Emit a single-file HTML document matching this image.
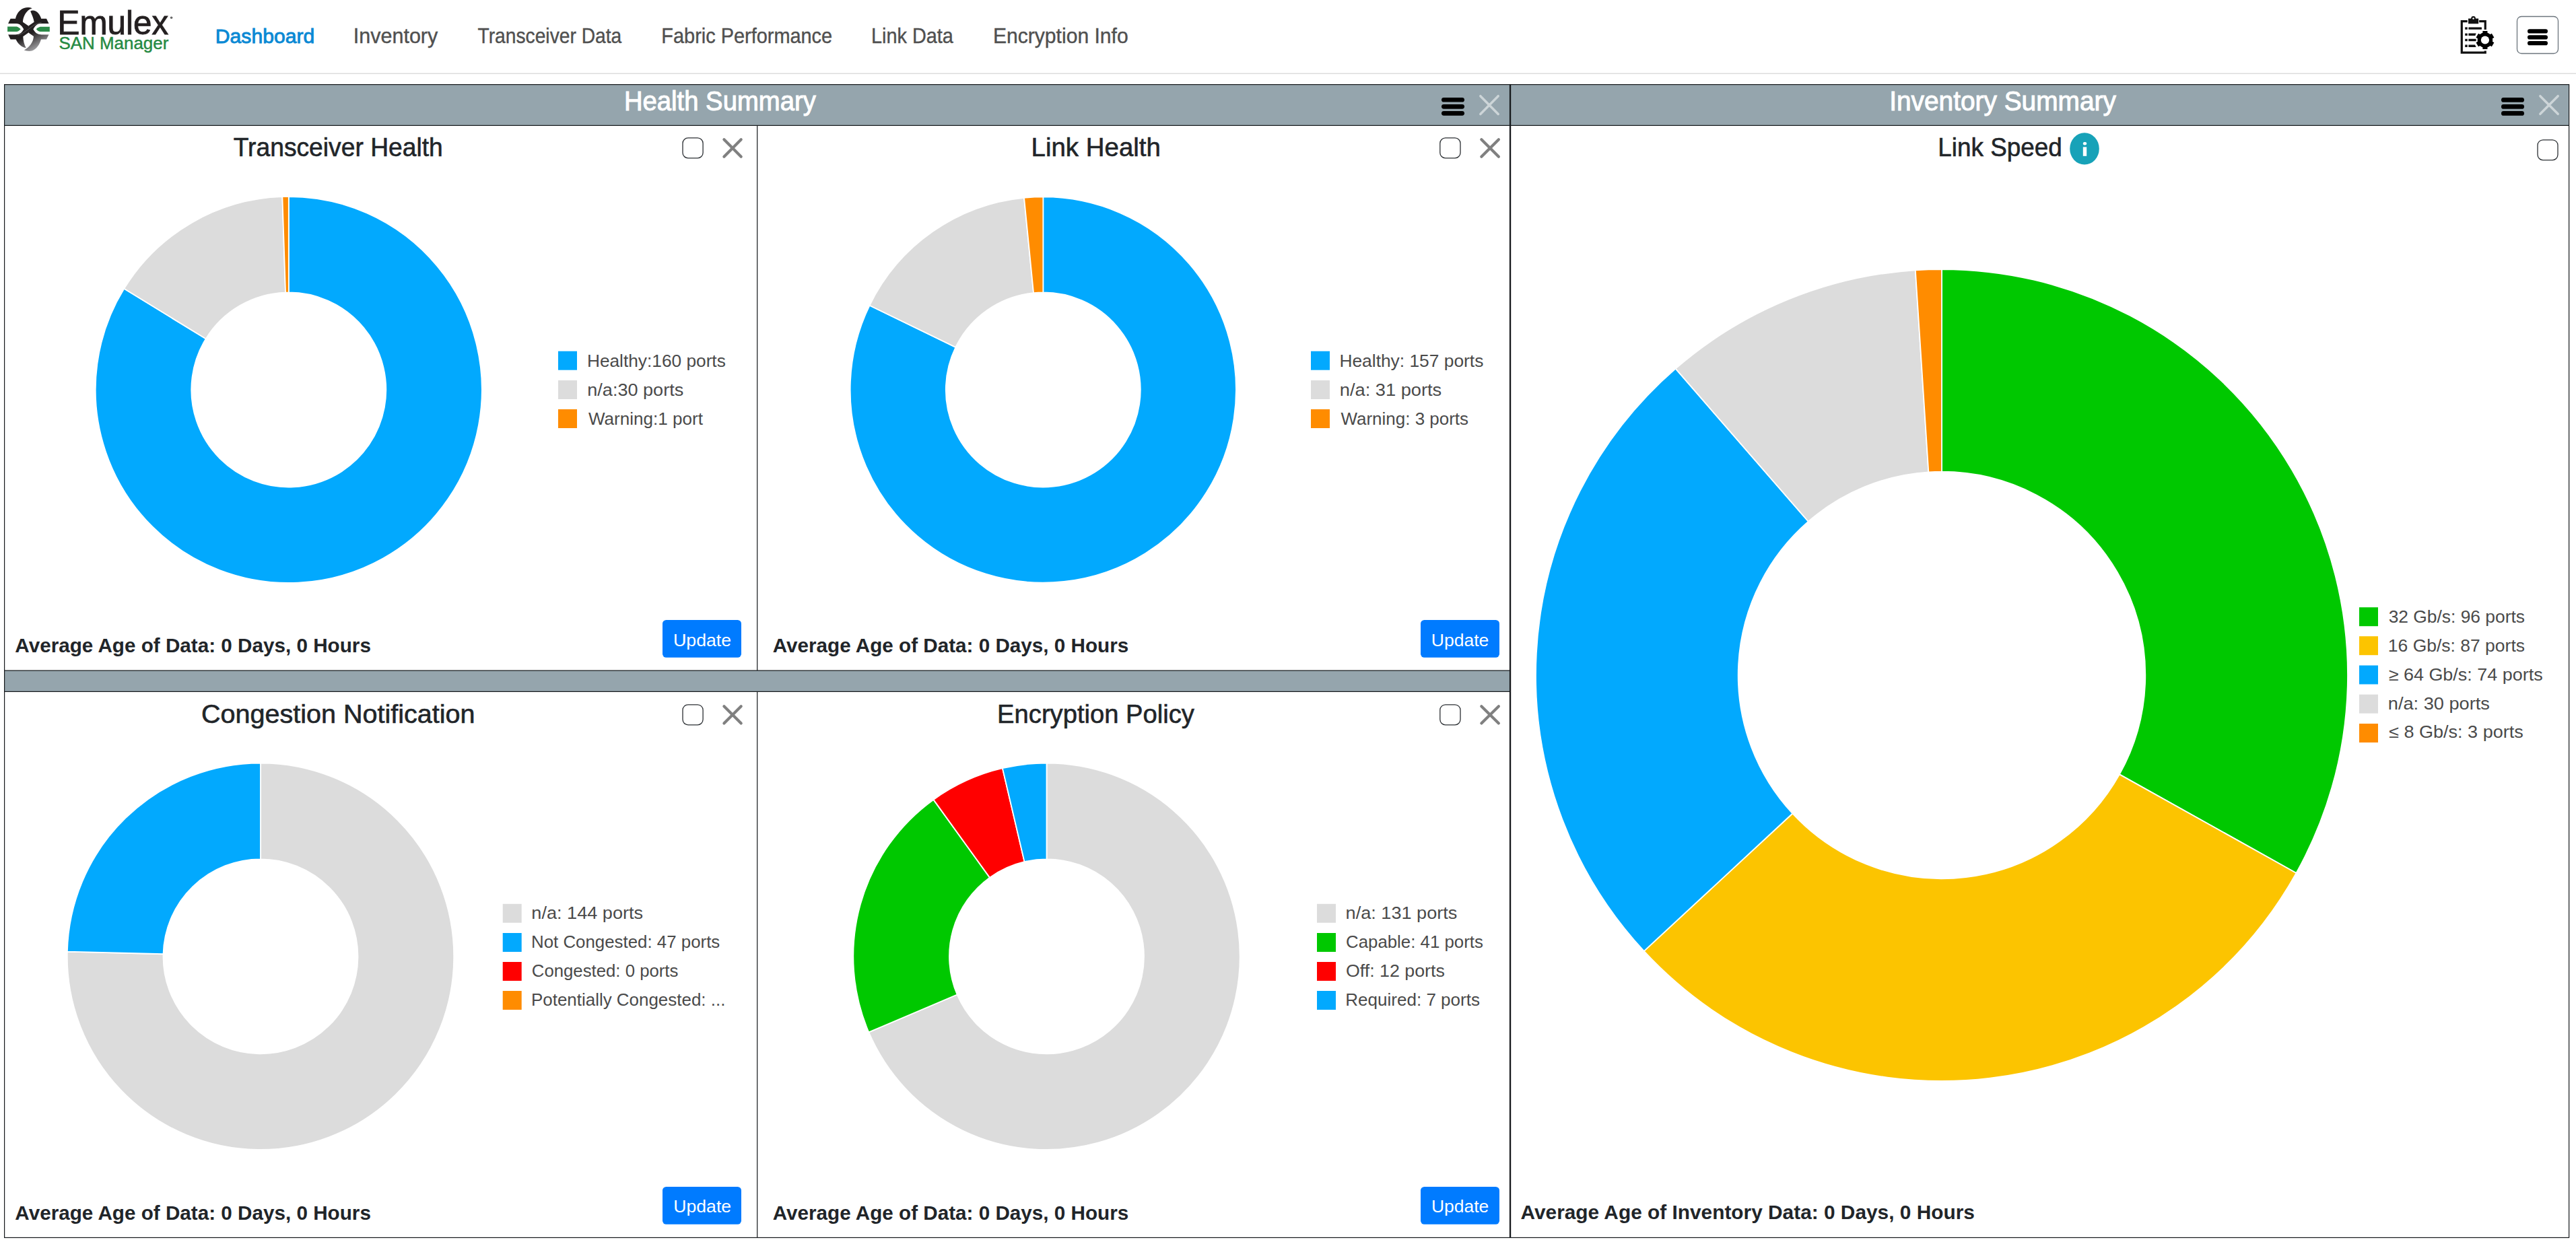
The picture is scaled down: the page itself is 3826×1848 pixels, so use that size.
<!DOCTYPE html>
<html><head><meta charset="utf-8"><title>Emulex SAN Manager - Dashboard</title>
<style>
html,body{margin:0;padding:0;background:#fff;overflow:hidden}
body{width:3826px;height:1848px;position:relative;font-family:"Liberation Sans",sans-serif}
svg{position:absolute;left:0;top:0}
text{font-family:"Liberation Sans",sans-serif}
</style></head><body>
<svg width="3826" height="1848" viewBox="0 0 3826 1848">
<rect x="0" y="108.6" width="3826" height="1.3" fill="#d9d9d9"/>
<rect x="6" y="125" width="2237" height="61.5" fill="#95a5ad"/>
<rect x="2243" y="125" width="1573" height="61.5" fill="#95a5ad"/>
<rect x="6" y="996" width="2237" height="31" fill="#95a5ad"/>
<rect x="6.0" y="125.0" width="3810.0" height="1.2" fill="#15181b"/>
<rect x="6.0" y="185.8" width="3810.0" height="1.2" fill="#15181b"/>
<rect x="6.0" y="995.5" width="2237.0" height="1.2" fill="#15181b"/>
<rect x="6.0" y="1026.8" width="2237.0" height="1.2" fill="#15181b"/>
<rect x="6.0" y="1837.9" width="3810.0" height="1.2" fill="#15181b"/>
<rect x="6.0" y="125.0" width="1.2" height="1714.0" fill="#15181b"/>
<rect x="1124.1" y="186.0" width="1.2" height="810.0" fill="#15181b"/>
<rect x="1124.1" y="1027.0" width="1.2" height="812.0" fill="#15181b"/>
<rect x="2241.9" y="125.0" width="1.2" height="1714.0" fill="#15181b"/>
<rect x="2243.0" y="125.0" width="1.2" height="1714.0" fill="#15181b"/>
<rect x="3815.0" y="125.0" width="1.2" height="1714.0" fill="#15181b"/>
<rect x="2141.0" y="144.9" width="34.0" height="6.7" rx="3.4" fill="#000"/><rect x="2141.0" y="155.0" width="34.0" height="6.7" rx="3.4" fill="#000"/><rect x="2141.0" y="165.0" width="34.0" height="6.7" rx="3.4" fill="#000"/>
<path d="M2198.8 142.7L2225.2 169.4M2225.2 142.7L2198.8 169.4" stroke="#cdd5d8" stroke-width="3.5" stroke-linecap="round"/>
<rect x="3715.0" y="145.0" width="34.0" height="6.8" rx="3.4" fill="#000"/><rect x="3715.0" y="155.0" width="34.0" height="6.8" rx="3.4" fill="#000"/><rect x="3715.0" y="165.0" width="34.0" height="6.8" rx="3.4" fill="#000"/>
<path d="M3772.8 142.7L3799.2 169.3M3799.2 142.7L3772.8 169.3" stroke="#cdd5d8" stroke-width="3.5" stroke-linecap="round"/>
<rect x="1014.0" y="204.9" width="30.1" height="30.0" rx="8" fill="#fff" stroke="#2b2f33" stroke-width="1.3"/>
<path d="M1075.4 207.3L1100.7 232.8M1100.7 207.3L1075.4 232.8" stroke="#808080" stroke-width="4.2" stroke-linecap="round"/>
<rect x="2138.8" y="204.9" width="30.2" height="30.0" rx="8" fill="#fff" stroke="#2b2f33" stroke-width="1.3"/>
<path d="M2200.3 207.3L2225.9 232.8M2225.9 207.3L2200.3 232.8" stroke="#808080" stroke-width="4.2" stroke-linecap="round"/>
<rect x="1014.0" y="1046.8" width="30.1" height="30.0" rx="8" fill="#fff" stroke="#2b2f33" stroke-width="1.3"/>
<path d="M1075.4 1049.3L1100.7 1074.4M1100.7 1049.3L1075.4 1074.4" stroke="#808080" stroke-width="4.2" stroke-linecap="round"/>
<rect x="2138.8" y="1046.8" width="30.2" height="30.0" rx="8" fill="#fff" stroke="#2b2f33" stroke-width="1.3"/>
<path d="M2200.3 1049.3L2225.9 1074.4M2225.9 1049.3L2200.3 1074.4" stroke="#808080" stroke-width="4.2" stroke-linecap="round"/>
<rect x="3769.0" y="207.8" width="30.0" height="30.0" rx="8" fill="#fff" stroke="#2b2f33" stroke-width="1.3"/>
<ellipse cx="3096" cy="220.9" rx="21.8" ry="23.7" fill="#17a2b8"/>
<rect x="3093.8" y="218.4" width="5.4" height="13.4" fill="#fff"/><rect x="3093.8" y="210.9" width="5.4" height="4.6" rx="2.2" fill="#fff"/>
<path d="M428.80 292.00A287 287 0 1 1 184.28 428.74L305.69 503.35A144.5 144.5 0 1 0 428.80 434.50Z" fill="#02a9fe" stroke="#fff" stroke-width="1.8" stroke-linejoin="round"/>
<path d="M184.28 428.74A287 287 0 0 1 419.36 292.16L424.05 434.58A144.5 144.5 0 0 0 305.69 503.35Z" fill="#dcdcdc" stroke="#fff" stroke-width="1.8" stroke-linejoin="round"/>
<path d="M419.36 292.16A287 287 0 0 1 428.80 292.00L428.80 434.50A144.5 144.5 0 0 0 424.05 434.58Z" fill="#ff8c00" stroke="#fff" stroke-width="1.8" stroke-linejoin="round"/>
<path d="M1549.30 292.40A286.6 286.6 0 1 1 1291.52 453.74L1419.33 515.85A144.5 144.5 0 1 0 1549.30 434.50Z" fill="#02a9fe" stroke="#fff" stroke-width="1.8" stroke-linejoin="round"/>
<path d="M1291.52 453.74A286.6 286.6 0 0 1 1521.06 293.79L1535.06 435.20A144.5 144.5 0 0 0 1419.33 515.85Z" fill="#dcdcdc" stroke="#fff" stroke-width="1.8" stroke-linejoin="round"/>
<path d="M1521.06 293.79A286.6 286.6 0 0 1 1549.30 292.40L1549.30 434.50A144.5 144.5 0 0 0 1535.06 435.20Z" fill="#ff8c00" stroke="#fff" stroke-width="1.8" stroke-linejoin="round"/>
<path d="M387.00 1133.60A287.2 287.2 0 1 1 99.89 1413.71L242.54 1417.24A144.5 144.5 0 1 0 387.00 1276.30Z" fill="#dcdcdc" stroke="#fff" stroke-width="1.8" stroke-linejoin="round"/>
<path d="M99.89 1413.71A287.2 287.2 0 0 1 387.00 1133.60L387.00 1276.30A144.5 144.5 0 0 0 242.54 1417.24Z" fill="#02a9fe" stroke="#fff" stroke-width="1.8" stroke-linejoin="round"/>
<path d="M1554.50 1133.60A287.2 287.2 0 1 1 1290.31 1533.43L1421.57 1477.47A144.5 144.5 0 1 0 1554.50 1276.30Z" fill="#dcdcdc" stroke="#fff" stroke-width="1.8" stroke-linejoin="round"/>
<path d="M1290.31 1533.43A287.2 287.2 0 0 1 1386.45 1187.90L1469.95 1303.62A144.5 144.5 0 0 0 1421.57 1477.47Z" fill="#00c800" stroke="#fff" stroke-width="1.8" stroke-linejoin="round"/>
<path d="M1386.45 1187.90A287.2 287.2 0 0 1 1488.95 1141.18L1521.52 1280.11A144.5 144.5 0 0 0 1469.95 1303.62Z" fill="#ff0000" stroke="#fff" stroke-width="1.8" stroke-linejoin="round"/>
<path d="M1488.95 1141.18A287.2 287.2 0 0 1 1554.50 1133.60L1554.50 1276.30A144.5 144.5 0 0 0 1521.52 1280.11Z" fill="#02a9fe" stroke="#fff" stroke-width="1.8" stroke-linejoin="round"/>
<path d="M2884.00 400.00A603 603 0 0 1 3410.51 1296.93L3147.96 1150.35A302.3 302.3 0 0 0 2884.00 700.70Z" fill="#00c800" stroke="#fff" stroke-width="1.8" stroke-linejoin="round"/>
<path d="M3410.51 1296.93A603 603 0 0 1 2441.76 1412.92L2662.29 1208.50A302.3 302.3 0 0 0 3147.96 1150.35Z" fill="#fcc400" stroke="#fff" stroke-width="1.8" stroke-linejoin="round"/>
<path d="M2441.76 1412.92A603 603 0 0 1 2488.67 547.67L2685.81 774.73A302.3 302.3 0 0 0 2662.29 1208.50Z" fill="#02a9fe" stroke="#fff" stroke-width="1.8" stroke-linejoin="round"/>
<path d="M2488.67 547.67A603 603 0 0 1 2844.83 401.27L2864.36 701.34A302.3 302.3 0 0 0 2685.81 774.73Z" fill="#dcdcdc" stroke="#fff" stroke-width="1.8" stroke-linejoin="round"/>
<path d="M2844.83 401.27A603 603 0 0 1 2884.00 400.00L2884.00 700.70A302.3 302.3 0 0 0 2864.36 701.34Z" fill="#ff8c00" stroke="#fff" stroke-width="1.8" stroke-linejoin="round"/>
<rect x="829.0" y="521.7" width="28" height="28" fill="#02a9fe"/>
<rect x="1947.0" y="521.7" width="28" height="28" fill="#02a9fe"/>
<rect x="829.0" y="565.0" width="28" height="28" fill="#dcdcdc"/>
<rect x="1947.0" y="565.0" width="28" height="28" fill="#dcdcdc"/>
<rect x="829.0" y="608.0" width="28" height="28" fill="#ff8c00"/>
<rect x="1947.0" y="608.0" width="28" height="28" fill="#ff8c00"/>
<rect x="746.7" y="1342.8" width="28" height="28" fill="#dcdcdc"/>
<rect x="746.7" y="1386.0" width="28" height="28" fill="#02a9fe"/>
<rect x="746.7" y="1429.0" width="28" height="28" fill="#ff0000"/>
<rect x="746.7" y="1472.0" width="28" height="28" fill="#ff8c00"/>
<rect x="1956.0" y="1342.8" width="28" height="28" fill="#dcdcdc"/>
<rect x="1956.0" y="1386.0" width="28" height="28" fill="#00c800"/>
<rect x="1956.0" y="1429.0" width="28" height="28" fill="#ff0000"/>
<rect x="1956.0" y="1472.0" width="28" height="28" fill="#02a9fe"/>
<rect x="3504.0" y="902.2" width="28" height="28" fill="#00c800"/>
<rect x="3504.0" y="945.2" width="28" height="28" fill="#fcc400"/>
<rect x="3504.0" y="988.5" width="28" height="28" fill="#02a9fe"/>
<rect x="3504.0" y="1031.7" width="28" height="28" fill="#dcdcdc"/>
<rect x="3504.0" y="1075.0" width="28" height="28" fill="#ff8c00"/>
<rect x="984.0" y="921.0" width="117.0" height="55.8" rx="5.5" fill="#007bff"/>
<rect x="2110.0" y="921.0" width="117.0" height="55.8" rx="5.5" fill="#007bff"/>
<rect x="984.0" y="1763.0" width="117.0" height="55.8" rx="5.5" fill="#007bff"/>
<rect x="2110.0" y="1763.0" width="117.0" height="55.8" rx="5.5" fill="#007bff"/>
<rect x="3738.5" y="24.5" width="61" height="55" rx="6.5" fill="#fff" stroke="#6c757d" stroke-width="1.3"/>
<rect x="3754.0" y="43.3" width="30.0" height="6.3" rx="3.1" fill="#000"/><rect x="3754.0" y="52.2" width="30.0" height="6.3" rx="3.1" fill="#000"/><rect x="3754.0" y="61.0" width="30.0" height="6.3" rx="3.1" fill="#000"/>
<g transform="translate(5,5) scale(0.06431)">
<defs><linearGradient id="lg" x1="350" y1="350" x2="760" y2="1110" gradientUnits="userSpaceOnUse"><stop offset="0" stop-color="#231f20"/><stop offset="0.5" stop-color="#231f20"/><stop offset="1" stop-color="#b0b0b3"/></linearGradient></defs>
<g fill="url(#lg)">
<path d="M110,465 L165,355 L320,355 L320,465 Z"/>
<path d="M840,355 L995,355 L1050,465 L840,465 Z"/>
<path d="M110,720 L165,830 L320,830 L320,720 Z"/>
<path d="M840,830 L995,830 L1050,720 L840,720 Z"/>
<path d="M665,112 C590,80 470,90 390,160 C320,220 290,300 280,360 L280,610 L590,610 L580,520 L450,430 C455,330 500,210 610,138 Z"/>
<path d="M625,182 C665,150 750,160 805,225 C850,280 870,330 875,360 L875,610 L570,610 L580,520 L710,430 C700,350 660,260 625,182 Z"/>
<path d="M290,590 L290,830 C330,930 420,1010 525,1030 C480,950 460,860 455,765 L580,675 L590,590 Z"/>
<path d="M870,590 L870,830 C840,950 760,1060 660,1095 C600,1110 530,1100 480,1080 C600,1010 690,900 700,760 L580,675 L570,590 Z"/>
</g>
<g fill="#fff">
<path d="M80,468 L300,468 C390,472 430,530 470,598 C430,666 390,716 300,718 L80,718 Z"/>
<path d="M1080,468 L860,468 C770,472 730,530 690,598 C730,666 770,716 860,718 L1080,718 Z"/>
</g>
<g fill="#2c8a48">
<path d="M95,535 L310,535 C350,545 380,575 400,595 C380,615 350,645 310,655 L95,655 Z"/>
<path d="M1070,540 L850,540 C810,550 780,575 760,597 C780,620 810,645 850,655 L1070,655 Z"/>
</g>
<path d="M330,738 C450,700 520,640 580,598 C640,556 720,470 880,440" fill="none" stroke="#fff" stroke-width="8" opacity="0.45"/>
</g>

<g transform="translate(3640,15) scale(0.06431)" fill="#111">
<path d="M385,257 L253,257 L253,980 L797,980 L797,940 M655,257 L797,257 L797,450" fill="none" stroke="#111" stroke-width="50"/>
<rect x="405" y="195" width="235" height="120"/>
<circle cx="522" cy="192" r="52"/>
<circle cx="522" cy="195" r="20" fill="#fff"/>
<rect x="330" y="395" width="55" height="53"/><rect x="330" y="538" width="55" height="52"/><rect x="330" y="665" width="55" height="53"/><rect x="330" y="800" width="55" height="55"/>
<rect x="410" y="395" width="305" height="53" rx="8"/>
<path d="M410,538 L585,538 L565,590 L410,590 Z"/>
<rect x="410" y="665" width="175" height="53"/>
<path d="M410,800 L560,800 L585,855 L410,855 Z"/>
<g transform="translate(792,692)">
<circle r="175" fill="#000"/>
<g fill="#000"><rect x="-55" y="-210" width="110" height="60"/><rect x="-55" y="-210" width="110" height="60" transform="rotate(60)"/><rect x="-55" y="-210" width="110" height="60" transform="rotate(120)"/><rect x="-55" y="-210" width="110" height="60" transform="rotate(180)"/><rect x="-55" y="-210" width="110" height="60" transform="rotate(240)"/><rect x="-55" y="-210" width="110" height="60" transform="rotate(300)"/></g>
<circle r="95" fill="#fff"/>
</g>
</g>

<circle cx="254.6" cy="26.2" r="1.8" fill="#6a6a6a"/>
<text x="319.80" y="63.55" font-size="30.23" font-weight="normal" fill="#0a89d4" stroke="#0a89d4" stroke-width="0.90" textLength="147.45" lengthAdjust="spacingAndGlyphs">Dashboard</text>
<text x="524.82" y="63.80" font-size="30.96" font-weight="normal" fill="#505050" stroke="#505050" stroke-width="0.40" textLength="125.48" lengthAdjust="spacingAndGlyphs">Inventory</text>
<text x="709.56" y="63.80" font-size="30.96" font-weight="normal" fill="#505050" stroke="#505050" stroke-width="0.40" textLength="213.66" lengthAdjust="spacingAndGlyphs">Transceiver Data</text>
<text x="982.34" y="63.80" font-size="30.96" font-weight="normal" fill="#505050" stroke="#505050" stroke-width="0.40" textLength="253.83" lengthAdjust="spacingAndGlyphs">Fabric Performance</text>
<text x="1294.05" y="63.80" font-size="30.96" font-weight="normal" fill="#505050" stroke="#505050" stroke-width="0.40" textLength="121.77" lengthAdjust="spacingAndGlyphs">Link Data</text>
<text x="1474.95" y="63.80" font-size="30.96" font-weight="normal" fill="#505050" stroke="#505050" stroke-width="0.40" textLength="200.77" lengthAdjust="spacingAndGlyphs">Encryption Info</text>
<text x="85.49" y="51.15" font-size="49.56" font-weight="normal" fill="#231f20" stroke="#231f20" stroke-width="0.90" textLength="164.76" lengthAdjust="spacingAndGlyphs">Emulex</text>
<text x="87.52" y="73.48" font-size="25.65" font-weight="normal" fill="#268a43" stroke="#268a43" stroke-width="0.45" textLength="162.79" lengthAdjust="spacingAndGlyphs">SAN Manager</text>
<text x="926.91" y="163.80" font-size="40.41" font-weight="normal" fill="#ffffff" stroke="#ffffff" stroke-width="1.00" textLength="284.89" lengthAdjust="spacingAndGlyphs">Health Summary</text>
<text x="2806.17" y="163.80" font-size="40.41" font-weight="normal" fill="#ffffff" stroke="#ffffff" stroke-width="1.00" textLength="336.73" lengthAdjust="spacingAndGlyphs">Inventory Summary</text>
<text x="346.72" y="231.70" font-size="38.52" font-weight="normal" fill="#212529" stroke="#212529" stroke-width="0.60" textLength="311.07" lengthAdjust="spacingAndGlyphs">Transceiver Health</text>
<text x="1531.60" y="231.70" font-size="38.52" font-weight="normal" fill="#212529" stroke="#212529" stroke-width="0.60" textLength="192.26" lengthAdjust="spacingAndGlyphs">Link Health</text>
<text x="298.95" y="1073.60" font-size="38.23" font-weight="normal" fill="#212529" stroke="#212529" stroke-width="0.60" textLength="406.57" lengthAdjust="spacingAndGlyphs">Congestion Notification</text>
<text x="1481.12" y="1073.60" font-size="38.23" font-weight="normal" fill="#212529" stroke="#212529" stroke-width="0.60" textLength="292.78" lengthAdjust="spacingAndGlyphs">Encryption Policy</text>
<text x="2878.32" y="231.70" font-size="38.52" font-weight="normal" fill="#212529" stroke="#212529" stroke-width="0.60" textLength="184.45" lengthAdjust="spacingAndGlyphs">Link Speed</text>
<text x="871.95" y="544.90" font-size="25.87" font-weight="normal" fill="#4a4a4a" textLength="205.87" lengthAdjust="spacingAndGlyphs">Healthy:160 ports</text>
<text x="872.31" y="587.90" font-size="25.87" font-weight="normal" fill="#4a4a4a" textLength="142.94" lengthAdjust="spacingAndGlyphs">n/a:30 ports</text>
<text x="874.00" y="630.90" font-size="25.87" font-weight="normal" fill="#4a4a4a" textLength="169.91" lengthAdjust="spacingAndGlyphs">Warning:1 port</text>
<text x="1989.44" y="544.90" font-size="25.87" font-weight="normal" fill="#4a4a4a" textLength="213.88" lengthAdjust="spacingAndGlyphs">Healthy: 157 ports</text>
<text x="1989.80" y="587.90" font-size="25.87" font-weight="normal" fill="#4a4a4a" textLength="151.45" lengthAdjust="spacingAndGlyphs">n/a: 31 ports</text>
<text x="1991.50" y="630.90" font-size="25.87" font-weight="normal" fill="#4a4a4a" textLength="189.51" lengthAdjust="spacingAndGlyphs">Warning: 3 ports</text>
<text x="789.31" y="1365.00" font-size="25.87" font-weight="normal" fill="#4a4a4a" textLength="165.84" lengthAdjust="spacingAndGlyphs">n/a: 144 ports</text>
<text x="788.98" y="1408.10" font-size="25.87" font-weight="normal" fill="#4a4a4a" textLength="280.33" lengthAdjust="spacingAndGlyphs">Not Congested: 47 ports</text>
<text x="789.79" y="1451.00" font-size="25.87" font-weight="normal" fill="#4a4a4a" textLength="217.61" lengthAdjust="spacingAndGlyphs">Congested: 0 ports</text>
<text x="788.97" y="1494.00" font-size="25.87" font-weight="normal" fill="#4a4a4a" textLength="288.37" lengthAdjust="spacingAndGlyphs">Potentially Congested: ...</text>
<text x="1998.61" y="1365.00" font-size="25.87" font-weight="normal" fill="#4a4a4a" textLength="165.74" lengthAdjust="spacingAndGlyphs">n/a: 131 ports</text>
<text x="1999.09" y="1408.10" font-size="25.87" font-weight="normal" fill="#4a4a4a" textLength="203.72" lengthAdjust="spacingAndGlyphs">Capable: 41 ports</text>
<text x="1999.05" y="1451.00" font-size="25.87" font-weight="normal" fill="#4a4a4a" textLength="146.79" lengthAdjust="spacingAndGlyphs">Off: 12 ports</text>
<text x="1998.27" y="1494.00" font-size="25.87" font-weight="normal" fill="#4a4a4a" textLength="199.75" lengthAdjust="spacingAndGlyphs">Required: 7 ports</text>
<text x="3547.68" y="924.80" font-size="25.87" font-weight="normal" fill="#4a4a4a" textLength="202.35" lengthAdjust="spacingAndGlyphs">32 Gb/s: 96 ports</text>
<text x="3546.84" y="967.80" font-size="25.87" font-weight="normal" fill="#4a4a4a" textLength="203.18" lengthAdjust="spacingAndGlyphs">16 Gb/s: 87 ports</text>
<text x="3547.66" y="1011.20" font-size="25.87" font-weight="normal" fill="#4a4a4a" textLength="228.98" lengthAdjust="spacingAndGlyphs">≥ 64 Gb/s: 74 ports</text>
<text x="3546.80" y="1053.70" font-size="25.87" font-weight="normal" fill="#4a4a4a" textLength="151.15" lengthAdjust="spacingAndGlyphs">n/a: 30 ports</text>
<text x="3548.08" y="1096.10" font-size="25.87" font-weight="normal" fill="#4a4a4a" textLength="199.67" lengthAdjust="spacingAndGlyphs">≤ 8 Gb/s: 3 ports</text>
<text x="22.34" y="969.40" font-size="29.80" font-weight="bold" fill="#212529" textLength="528.56" lengthAdjust="spacingAndGlyphs">Average Age of Data: 0 Days, 0 Hours</text>
<text x="1147.74" y="969.40" font-size="29.80" font-weight="bold" fill="#212529" textLength="528.46" lengthAdjust="spacingAndGlyphs">Average Age of Data: 0 Days, 0 Hours</text>
<text x="22.34" y="1811.60" font-size="29.80" font-weight="bold" fill="#212529" textLength="528.56" lengthAdjust="spacingAndGlyphs">Average Age of Data: 0 Days, 0 Hours</text>
<text x="1147.74" y="1811.60" font-size="29.80" font-weight="bold" fill="#212529" textLength="528.46" lengthAdjust="spacingAndGlyphs">Average Age of Data: 0 Days, 0 Hours</text>
<text x="2258.53" y="1811.40" font-size="29.80" font-weight="bold" fill="#212529" textLength="674.37" lengthAdjust="spacingAndGlyphs">Average Age of Inventory Data: 0 Days, 0 Hours</text>
<text x="1000.13" y="959.90" font-size="26.31" font-weight="normal" fill="#ffffff" textLength="85.95" lengthAdjust="spacingAndGlyphs">Update</text>
<text x="2125.74" y="959.90" font-size="26.31" font-weight="normal" fill="#ffffff" textLength="85.53" lengthAdjust="spacingAndGlyphs">Update</text>
<text x="1000.34" y="1801.20" font-size="26.31" font-weight="normal" fill="#ffffff" textLength="85.74" lengthAdjust="spacingAndGlyphs">Update</text>
<text x="2125.95" y="1801.20" font-size="26.31" font-weight="normal" fill="#ffffff" textLength="85.33" lengthAdjust="spacingAndGlyphs">Update</text>
</svg>
</body></html>
